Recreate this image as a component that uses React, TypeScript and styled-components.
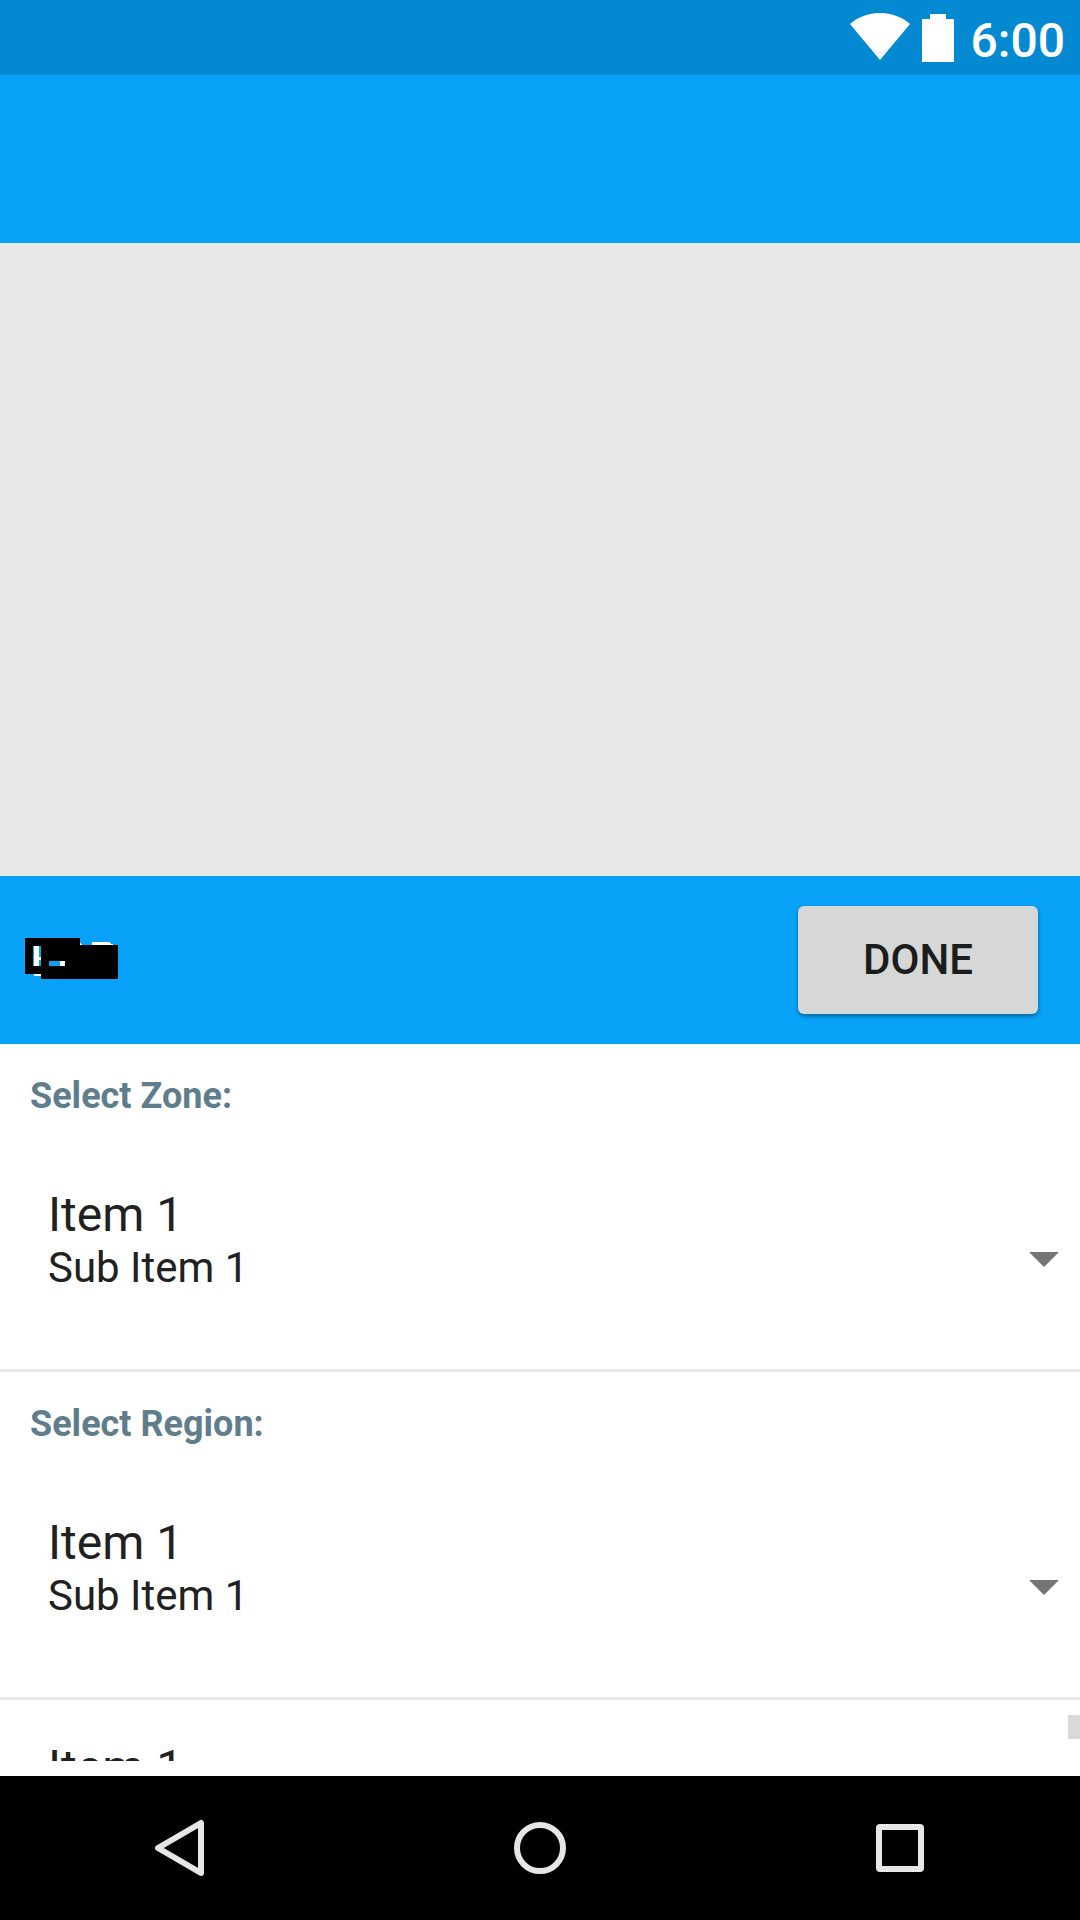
import React, { useId, useState } from "react";
import styled, { createGlobalStyle } from "styled-components";

const GlobalStyle = createGlobalStyle`
  *, *::before, *::after { box-sizing: border-box; }
  body {
    margin: 0;
    font-family: Roboto, "Noto Sans", sans-serif;
    color: #212121;
    background: #ffffff;
  }
`;

const Screen = styled.div`
  display: flex;
  flex-direction: column;
  height: 100vh;
  overflow: hidden;
`;

const StatusBar = styled.header`
  display: flex;
  flex: none;
  align-items: center;
  justify-content: flex-end;
  gap: 12px;
  height: 75px;
  padding: 0 15px;
  background: #0388d2;
  color: #ffffff;
`;

const Clock = styled.time`
  padding: 6px 0 0 5px;
  font-size: 48px;
  font-weight: 500;
  line-height: 56px;
`;

const Toolbar = styled.div`
  display: flex;
  flex: none;
  align-items: center;
  justify-content: space-between;
  height: 168px;
  padding: 0 42px 0 25px;
  background: #08a2f8;
`;

const Content = styled.main`
  display: grid;
  flex: 1;
  grid-template-rows: minmax(0, 15fr) auto minmax(0, 17fr);
  min-height: 0;
  padding-bottom: 15px;
`;

const MapArea = styled.section`
  background: #e8e8e8;
`;

const DoneButton = styled.button`
  width: 240px;
  height: 108px;
  padding: 0;
  border: 0;
  border-radius: 6px;
  background: #d6d7d7;
  box-shadow: 0 2px 4px rgba(0, 0, 0, 0.4);
  color: #1b1c1c;
  font: 500 42px/50px Roboto, "Noto Sans", sans-serif;
  text-transform: uppercase;
`;

const FormPane = styled.section`
  position: relative;
  overflow: hidden;
  background: #ffffff;
`;

const Field = styled.div`
  border-bottom: 3px solid #e8e8e8;
`;

const FieldLabel = styled.label`
  display: block;
  padding: 31px 30px 30px;
  color: #607d8b;
  font-size: 36px;
  font-weight: 700;
  line-height: 42px;
`;

const Spinner = styled.div`
  display: grid;
  grid-template-columns: 1fr auto;
  align-items: center;
  height: 222px;
  padding: 0 21px 0 48px;
`;

const Choice = styled.div`
  grid-area: 1 / 1;
  align-self: start;
  padding-top: 40px;
`;

const ChoiceTitle = styled.div`
  font-size: 48px;
  line-height: 56px;
`;

const ChoiceDetail = styled.div`
  font-size: 42px;
  line-height: 50px;
`;

const Caret = styled.svg`
  grid-area: 1 / 2;
`;

const NativeSelect = styled.select`
  grid-area: 1 / 1 / 2 / 3;
  align-self: stretch;
  width: 100%;
  opacity: 0;
  font: 400 42px/50px Roboto, sans-serif;
`;

const ScrollThumb = styled.div`
  position: absolute;
  right: 0;
  bottom: 22px;
  width: 12px;
  height: 24px;
  background: #d9d9d9;
`;

const NavBar = styled.nav`
  display: flex;
  flex: none;
  justify-content: center;
  height: 144px;
  background: #000000;
`;

const NavButton = styled.button`
  display: flex;
  flex: 0 1 360px;
  align-items: center;
  justify-content: center;
  padding: 0;
  border: 0;
  background: transparent;
  color: #e6e6e6;
`;

const WifiIcon = () => (
  <svg width="60" height="50" viewBox="0 0 60 50" fill="currentColor" aria-hidden="true">
    <path d="M0 11C8 4 18 0 30 0s22 4 30 11L30 47z" />
  </svg>
);

const BatteryIcon = () => (
  <svg width="32" height="48" viewBox="0 0 32 48" fill="currentColor" aria-hidden="true">
    <path d="M8 0h16v5h8v43H0V5h8z" />
  </svg>
);

const MaskedLogo = () => (
  <svg width="94" height="44" viewBox="0 0 94 44" role="img" aria-label="Masked title" shapeRendering="crispEdges">
    <path d="M0 0h55v7h38v34H16v-5H0z" fill="#000000" />
    <path d="M8 8h8v20H8zM24 23h16v5H24z" fill="#08a2f8" />
    <path d="M9 8h5v11h2v3h-2v6H9zM35 23h5v5h-5zM9 36h7v2H9zM55 5l2 2h-2zM67 4h17l5 3H67z" fill="#ffffff" />
  </svg>
);

const NavIcon = ({ children }: { children: React.ReactNode }) => (
  <svg width="72" height="72" viewBox="0 0 72 72" fill="none" stroke="currentColor" strokeWidth="6" strokeLinejoin="round" aria-hidden="true">
    {children}
  </svg>
);

const options = ["Item 1", "Item 2", "Item 3", "Item 4"];

interface ItemSpinnerProps {
  name: string;
  label?: string;
  detailed?: boolean;
}

function ItemSpinner({ name, label, detailed = false }: ItemSpinnerProps) {
  const id = useId();
  const [value, setValue] = useState(options[0]);

  return (
    <Field>
      {label && <FieldLabel htmlFor={id}>{label}</FieldLabel>}
      <Spinner>
        <Choice aria-hidden="true">
          <ChoiceTitle>{value}</ChoiceTitle>
          {detailed && <ChoiceDetail>Sub {value}</ChoiceDetail>}
        </Choice>
        <Caret width="30" height="18" viewBox="0 0 30 18" aria-hidden="true">
          <path d="M0 3h30L15 18z" fill="#757575" />
        </Caret>
        <NativeSelect
          id={id}
          name={name}
          aria-label={label ? undefined : name}
          value={value}
          onChange={(event) => setValue(event.target.value)}
        >
          {options.map((option) => (
            <option key={option}>{option}</option>
          ))}
        </NativeSelect>
      </Spinner>
    </Field>
  );
}

export default function App() {
  return (
    <Screen>
      <GlobalStyle />
      <StatusBar>
        <WifiIcon />
        <BatteryIcon />
        <Clock>6:00</Clock>
      </StatusBar>
      <Toolbar />
      <Content>
        <MapArea />
        <Toolbar>
          <MaskedLogo />
          <DoneButton type="button">Done</DoneButton>
        </Toolbar>
        <FormPane>
          <ItemSpinner label="Select Zone:" name="zone" detailed />
          <ItemSpinner label="Select Region:" name="region" detailed />
          <ItemSpinner name="area" />
          <ScrollThumb />
        </FormPane>
      </Content>
      <NavBar>
        <NavButton type="button" aria-label="Back">
          <NavIcon>
            <path d="M57 11v50L14 36z" />
          </NavIcon>
        </NavButton>
        <NavButton type="button" aria-label="Home">
          <NavIcon>
            <circle cx="36" cy="36" r="23" />
          </NavIcon>
        </NavButton>
        <NavButton type="button" aria-label="Overview">
          <NavIcon>
            <rect x="15" y="15" width="42" height="42" rx="1" />
          </NavIcon>
        </NavButton>
      </NavBar>
    </Screen>
  );
}
